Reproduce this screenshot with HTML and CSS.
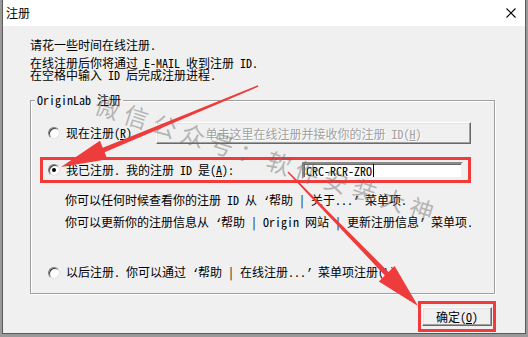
FILE: index.html
```html
<!DOCTYPE html>
<html lang="zh-CN">
<head>
    <meta charset="UTF-8">
    <title>注册</title>
    <link rel="stylesheet" href="styles.css">
</head>
<body>

<div class="window">
    <div class="titlebar">
        <span class="title">注册</span>
        <svg class="close" width="10" height="10" viewBox="0 0 10 10">
            <path d="M0.5 0.5 L9.5 9.5 M9.5 0.5 L0.5 9.5" stroke="#000" stroke-width="1.1" fill="none"/>
        </svg>
    </div>

    <div class="client">
        <p class="intro first">请花一些时间在线注册.</p>
        <p class="intro">在线注册后你将通过 E-MAIL 收到注册 ID.</p>
        <p class="intro">在空格中输入 ID 后完成注册进程.</p>

        <div class="group">
            <span class="legend">OriginLab 注册</span>

            <div class="row row-now">
                <span class="radio"></span>
                <span class="label label-now">现在注册(<u>R</u>)</span>
                <button class="btn btn-wide" disabled>单击这里在线注册并接收你的注册 ID(<u>H</u>)</button>
            </div>

            <div class="row row-have">
                <span class="radio checked"></span>
                <span class="label label-have">我已注册. 我的注册 ID 是(<u>A</u>):</span>
                <div class="id-input">CRC-RCR-ZRO<span class="caret"></span></div>
            </div>

            <p class="note first-note">你可以任何时候查看你的注册 ID 从 <span class="q">‘</span>帮助 | 关于...<span class="q">’</span> 菜单项.</p>
            <p class="note">你可以更新你的注册信息从 <span class="q">‘</span>帮助 | Origin 网站 | 更新注册信息<span class="q">’</span> 菜单项.</p>

            <div class="row row-later">
                <span class="radio"></span>
                <span class="label">以后注册. 你可以通过 <span class="q">‘</span>帮助 | 在线注册...<span class="q">’</span> 菜单项注册(<u>L</u>).</span>
            </div>
        </div>

        <div class="footer">
            <div class="mark">
                <button class="btn btn-ok">确定(<u>O</u>)</button>
            </div>
        </div>
    </div>
</div>

<!-- 水印和标注箭头 -->
<span class="watermark">微信公众号：软件安装大神</span>

<svg class="arrows" width="528" height="337" viewBox="0 0 528 337">
    <polygon points="257.7,85.3 102.8,147.7 99.9,140.7 61,167 107.5,159.3 104.6,152.3 258.3,86.7" />
    <polygon points="288.5,171.5 388.5,272 394.6,266 418,306 378.8,281.4 384.9,275.4 287.5,172.5" />
</svg>

</body>
</html>
```

FILE: styles.css
```css
/* Base */
* {
    box-sizing: border-box;
    margin: 0;
    padding: 0;
}

body {
    width: 528px;
    height: 337px;
    overflow: hidden;
    background-color: #9a9a9a;
    font-family: "Noto Sans Mono CJK SC", "Noto Sans CJK SC", monospace;
    font-size: 12px;
    color: #000;
}

u {
    text-decoration: underline;
    text-underline-offset: 1px;
}

/* half-width quotes, as in the bitmap font */
.q {
    font-family: "Liberation Mono", monospace;
    letter-spacing: -1.2px;
}

/* Window frame */
.window {
    margin-left: 2px;
    width: 524px;
    height: 334px;
    border: 1px solid #5a5a5a;
    border-top: none;
    background-color: #f0f0f0;
}

.titlebar {
    height: 26px;
    background-color: #ffffff;
    display: flex;
    align-items: center;
    justify-content: space-between;
    padding: 0 9px 0 3px;
}

.title {
    font-family: "Noto Sans CJK SC", sans-serif;
    font-size: 12px;
    line-height: 12px;
}

.close {
    display: block;
}

/* Client area */
.client {
    height: 307px;
    padding: 13px 0 0 27px;
}

.intro {
    height: 12px;
    line-height: 12px;
}

.intro.first {
    margin-bottom: 6px;
}

/* Group box */
.group {
    position: relative;
    margin-top: 19px;
    width: 465px;
    height: 194px;
    padding-top: 21px;
    border: 1px solid #a0a0a0;
    box-shadow: 1px 1px 0 #ffffff, inset 1px 1px 0 #ffffff;
}

.legend {
    position: absolute;
    top: -7px;
    left: 4px;
    padding: 0 2px;
    line-height: 12px;
    background-color: #f0f0f0;
}

.row {
    display: flex;
    align-items: center;
    padding-left: 17px;
}

.row-now {
    height: 22px;
}

.row-have {
    margin-top: 13px;
    margin-left: 9px;
    width: 431px;
    height: 26px;
    padding-left: 5px;
    border: 3px solid #f23a3a;
}

.row-later {
    margin-top: 29px;
    height: 20px;
}

.radio {
    flex: none;
    position: relative;
    width: 12px;
    height: 12px;
    border-radius: 50%;
    background-color: #ffffff;
    border: 1px solid;
    border-color: #808080 #e3e3e3 #e3e3e3 #808080;
    box-shadow: inset 1px 1px 0 #404040;
}

.radio.checked::after {
    content: "";
    position: absolute;
    left: 3px;
    top: 3px;
    width: 4px;
    height: 4px;
    border-radius: 50%;
    background-color: #000;
}

.label {
    margin-left: 6px;
    line-height: 12px;
    white-space: nowrap;
}

.label-now {
    width: 90px;
}

.label-have {
    width: 236px;
}

.note {
    margin-left: 34px;
    line-height: 20px;
    white-space: nowrap;
}

.note.first-note {
    margin-top: 7px;
}

/* Controls */
.btn {
    font-family: inherit;
    font-size: 12px;
    background-color: #f0f0f0;
    color: #000;
    border: 1px solid;
    border-color: #ffffff #696969 #696969 #ffffff;
    box-shadow: inset -1px -1px 0 #a0a0a0, inset 1px 1px 0 #e3e3e3;
}

.btn-wide {
    width: 315px;
    height: 22px;
    color: #a0a0a0;
    text-shadow: 1px 1px 0 #ffffff;
}

.id-input {
    width: 161px;
    height: 17px;
    padding-left: 2px;
    line-height: 13px;
    background-color: #ffffff;
    border: 2px solid;
    border-color: #8a8a8a #f0f0f0 #f0f0f0 #8a8a8a;
    box-shadow: inset 1px 1px 0 #696969;
    display: flex;
    align-items: center;
}

.caret {
    display: inline-block;
    width: 1px;
    height: 13px;
    margin-left: 1px;
    background-color: #000;
}

.footer {
    display: flex;
    justify-content: flex-end;
    margin-top: 7px;
    padding-right: 29px;
}

.mark {
    border: 3px solid #f23a3a;
    padding: 3px 1px;
}

.btn-ok {
    display: block;
    width: 70px;
    height: 19px;
    line-height: 15px;
}

/* Overlays */
.watermark {
    position: absolute;
    left: 102px;
    top: 86px;
    transform: rotate(18deg);
    transform-origin: left top;
    font-family: "Noto Sans CJK SC", sans-serif;
    font-size: 24px;
    letter-spacing: 6px;
    white-space: nowrap;
    color: rgba(105, 105, 105, 0.45);
    pointer-events: none;
}

.arrows {
    position: absolute;
    left: 0;
    top: 0;
    pointer-events: none;
}

.arrows polygon {
    fill: #ee3b3b;
}
```
